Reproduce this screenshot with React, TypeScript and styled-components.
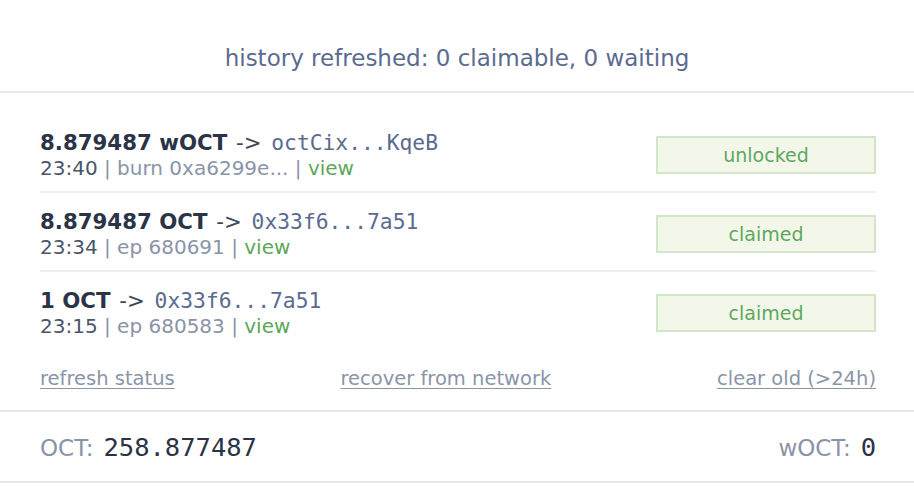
import React from "react";
import styled, { createGlobalStyle } from "styled-components";

const GlobalStyle = createGlobalStyle`
  html, body {
    margin: 0;
    padding: 0;
    background: #ffffff;
    font-family: "DejaVu Sans", Verdana, sans-serif;
  }
`;

const Panel = styled.div`
  width: 914px;
  background: #ffffff;
`;

const Status = styled.div`
  padding: 44px 0 19px;
  text-align: center;
  font-size: 23px;
  line-height: 28px;
  color: #5b6b8f;
  border-bottom: 2px solid #e6e8ec;
`;

const List = styled.div`
  padding: 21px 38px 18px 40px;
  border-bottom: 2px solid #e6e8ec;
`;

const Row = styled.div<{ $last?: boolean }>`
  display: flex;
  align-items: center;
  justify-content: space-between;
  padding: 15px 0 11px;
  border-bottom: ${(p) => (p.$last ? "none" : "2px solid #eef0f3")};
`;

const Info = styled.div`
  display: flex;
  flex-direction: column;
`;

const Title = styled.div`
  font-size: 21.3px;
  line-height: 27px;
  color: #3d4659;
  white-space: nowrap;
`;

const Amount = styled.b`
  font-weight: 700;
  color: #2b3446;
`;

const Arrow = styled.span`
  padding: 0 3px 0 2px;
`;

const Addr = styled.span`
  font-family: "DejaVu Sans Mono", Menlo, monospace;
  color: #5b6b8f;
`;

const Meta = styled.div`
  font-size: 20px;
  line-height: 24px;
  color: #8a94a8;
  white-space: nowrap;
`;

const Time = styled.span`
  color: #4a5568;
`;

const ViewLink = styled.a`
  color: #5ca75a;
  text-decoration: none;
  cursor: pointer;
`;

const Badge = styled.div`
  width: 216px;
  height: 34px;
  display: flex;
  align-items: center;
  justify-content: center;
  background: #f2f7ea;
  border: 2px solid #d2e6c8;
  color: #5fa85d;
  font-size: 19px;
`;

const Actions = styled.div`
  display: flex;
  justify-content: space-between;
  padding-top: 17px;
`;

const ActionLink = styled.a`
  font-size: 19.5px;
  line-height: 26px;
  color: #8a95a8;
  text-decoration: underline;
  text-underline-offset: 3px;
  cursor: pointer;
`;

const Balances = styled.div`
  display: flex;
  justify-content: space-between;
  align-items: center;
  height: 69px;
  padding: 0 38px 0 40px;
  border-bottom: 2px solid #e6e8ec;
`;

const Balance = styled.div`
  display: flex;
  align-items: baseline;
  gap: 10px;
`;

const Label = styled.span`
  font-size: 23px;
  color: #8a94a8;
`;

const Value = styled.span`
  font-family: "DejaVu Sans Mono", Menlo, monospace;
  font-size: 25.5px;
  color: #2b3446;
`;

type Tx = {
  amount: string;
  to: string;
  time: string;
  ref: string;
  status: string;
};

const txs: Tx[] = [
  { amount: "8.879487 wOCT", to: "octCix...KqeB", time: "23:40", ref: "burn 0xa6299e...", status: "unlocked" },
  { amount: "8.879487 OCT", to: "0x33f6...7a51", time: "23:34", ref: "ep 680691", status: "claimed" },
  { amount: "1 OCT", to: "0x33f6...7a51", time: "23:15", ref: "ep 680583", status: "claimed" },
];

export default function App() {
  return (
    <>
      <GlobalStyle />
      <Panel>
        <Status>history refreshed: 0 claimable, 0 waiting</Status>
        <List>
          {txs.map((tx, i) => (
            <Row key={i} $last={i === txs.length - 1}>
              <Info>
                <Title>
                  <Amount>{tx.amount}</Amount> <Arrow>-&gt;</Arrow> <Addr>{tx.to}</Addr>
                </Title>
                <Meta>
                  <Time>{tx.time}</Time> | {tx.ref} | <ViewLink>view</ViewLink>
                </Meta>
              </Info>
              <Badge>{tx.status}</Badge>
            </Row>
          ))}
          <Actions>
            <ActionLink>refresh status</ActionLink>
            <ActionLink>recover from network</ActionLink>
            <ActionLink>clear old (&gt;24h)</ActionLink>
          </Actions>
        </List>
        <Balances>
          <Balance>
            <Label>OCT:</Label>
            <Value>258.877487</Value>
          </Balance>
          <Balance>
            <Label>wOCT:</Label>
            <Value>0</Value>
          </Balance>
        </Balances>
      </Panel>
    </>
  );
}
